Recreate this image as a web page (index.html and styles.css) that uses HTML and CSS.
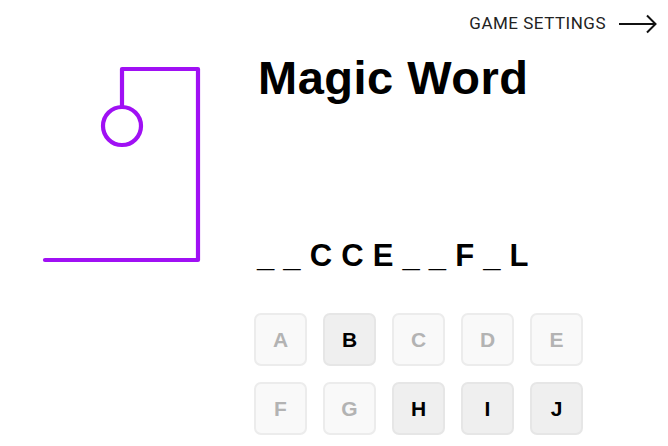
FILE: index.html
```html
<!DOCTYPE html>
<html>
<head>
<meta charset="utf-8">
<link rel="stylesheet" href="styles.css">
</head>
<body>
<header class="top">
  <a class="settings" href="#">GAME SETTINGS
    <svg class="arrow" width="38" height="20" viewBox="0 0 38 20"><path d="M0 10H36M28 1.5L36.5 10L28 18.5" fill="none" stroke="#111" stroke-width="2"/></svg>
  </a>
</header>
<main class="main">
  <svg class="gallows" width="258" height="240" viewBox="0 0 258 240">
    <g fill="none" stroke="#a010f4" stroke-width="4.2" stroke-linecap="round" stroke-linejoin="round">
      <path d="M122 53V15H198V206H45"/>
      <circle cx="122" cy="72" r="19"/>
    </g>
  </svg>
  <section class="game">
    <h1 class="title">Magic Word</h1>
    <div class="word">_ _ C C E _ _ F _ L</div>
    <div class="keys">
      <button class="key used">A</button>
      <button class="key">B</button>
      <button class="key used">C</button>
      <button class="key used">D</button>
      <button class="key used">E</button>
      <button class="key used">F</button>
      <button class="key used">G</button>
      <button class="key">H</button>
      <button class="key">I</button>
      <button class="key">J</button>
    </div>
  </section>
</main>
</body>
</html>
```
FILE: styles.css
```css
html, body {
  margin: 0;
  padding: 0;
  background: #fff;
  overflow: hidden;
}
body {
  font-family: "Liberation Sans", Arial, sans-serif;
  color: #000;
}
.top {
  display: flex;
  justify-content: flex-end;
  padding: 14px 11px 0 0;
  height: 19px;
}
.settings {
  display: flex;
  align-items: center;
  gap: 13px;
  font-family: Roboto, "Liberation Sans", sans-serif;
  font-size: 17px;
  line-height: 19px;
  color: #222;
  text-decoration: none;
  letter-spacing: 0.5px;
}
.arrow {
  display: block;
  margin-top: 1px;
}
.main {
  display: flex;
  margin-top: 21px;
}
.gallows {
  display: block;
  flex: none;
}
.game {
  display: flex;
  flex-direction: column;
}
.title {
  margin: 0;
  font-size: 47px;
  line-height: 47px;
  font-weight: 700;
  letter-spacing: 0.5px;
}
.word {
  margin-top: 140px;
  font-size: 31px;
  line-height: 30px;
  font-weight: 700;
  white-space: pre;
  word-spacing: 0.5px;
  margin-left: -1px;
}
.keys {
  margin-top: 42px;
  display: grid;
  grid-template-columns: repeat(5, 53px);
  grid-auto-rows: 53px;
  gap: 16px;
  margin-left: -4px;
}
.key {
  box-sizing: border-box;
  width: 53px;
  height: 53px;
  border: 2px solid #e6e6e6;
  border-radius: 7px;
  background: #efefef;
  font-family: "Liberation Sans", Arial, sans-serif;
  font-size: 21px;
  font-weight: 700;
  color: #000;
  padding: 0;
}
.key.used {
  background: #f9f9f9;
  border-color: #ececec;
  color: #b3b3b3;
}
```
